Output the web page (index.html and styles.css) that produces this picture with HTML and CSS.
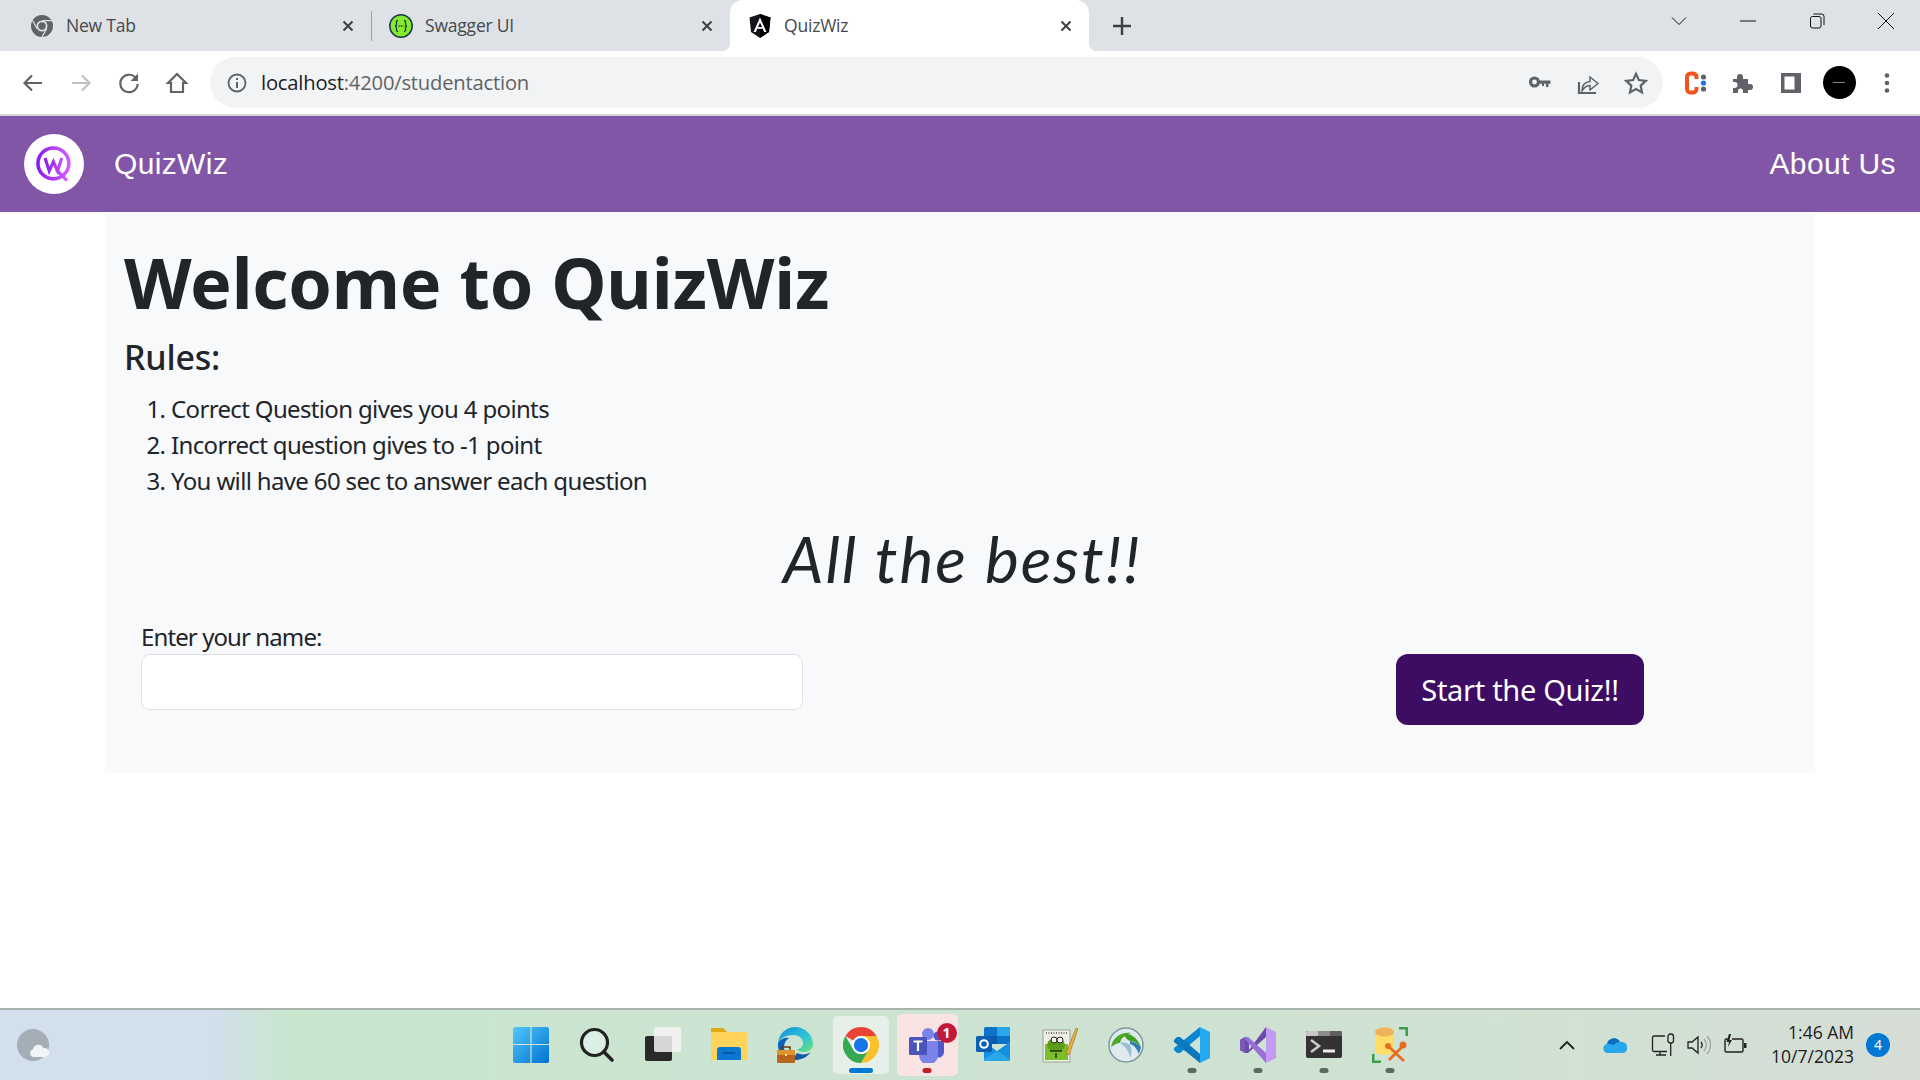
FILE: index.html
```html
<!DOCTYPE html>
<html lang="en">
<head>
    <meta charset="UTF-8">
    <title>QuizWiz</title>
    <link rel="stylesheet" href="styles.css">
</head>
<body>
    <!-- Browser tabs -->
    <div class="tabstrip">
        <div class="tab tab-first">
            <svg class="favicon" viewBox="0 0 48 48"><circle cx="24" cy="24" r="22" fill="#5f6368"/><circle cx="24" cy="24" r="11" fill="#dee1e6"/><circle cx="24" cy="24" r="7.5" fill="#5f6368"/><path d="M24 13h19M14.5 29.5L5 13M33.5 29.5L24 46" stroke="#dee1e6" stroke-width="2.5"/></svg>
            <span class="tab-title">New Tab</span>
            <svg class="tab-close" viewBox="0 0 12 12"><path d="M1.5 1.5l9 9M10.500 1.500l-9 9"/></svg>
        </div>
        <div class="tab">
            <svg class="favicon" viewBox="0 0 24 24"><circle cx="12" cy="12" r="11.200" fill="#85ea2d" stroke="#173647" stroke-width="1.500"/><path d="M9 6.500c-2 0-1.500 2-1.500 3.500S7 12 6 12c1 0 1.500.5 1.500 2s-.5 3.500 1.500 3.500M15 6.500c2 0 1.500 2 1.500 3.500s.5 2 1.500 2c-1 0-1.500.5-1.500 2s.5 3.500-1.500 3.500" fill="none" stroke="#173647" stroke-width="1.300"/><path d="M9.500 12h5" stroke="#173647" stroke-width="1.500" stroke-dasharray="1.200 .9"/></svg>
            <span class="tab-title">Swagger UI</span>
            <svg class="tab-close" viewBox="0 0 12 12"><path d="M1.5 1.5l9 9M10.500 1.500l-9 9"/></svg>
        </div>
        <div class="tab tab-active">
            <svg class="favicon" viewBox="0 0 24 24"><path d="M12 0L1.500 3.500 3 18l9 6 9-6 1.500-14.500z" fill="#12151c"/><path d="M12 0v24l9-6 1.500-14.500z" fill="#000"/><path d="M12 3.500L5.500 18h2.400l1.300-3.200h5.600l1.300 3.200h2.400zm0 5l2 4.400h-4z" fill="#fff"/></svg>
            <span class="tab-title">QuizWiz</span>
            <svg class="tab-close" viewBox="0 0 12 12"><path d="M1.5 1.5l9 9M10.500 1.500l-9 9"/></svg>
        </div>
        <svg class="new-tab" viewBox="0 0 18 18"><path d="M9 0v18M0 9h18"/></svg>
        <div class="window-controls">
            <svg viewBox="0 0 16 16"><path d="M1 4.500l7 7 7-7"/></svg>
            <svg viewBox="0 0 16 16"><path d="M0 8h16"/></svg>
            <svg viewBox="0 0 16 16"><rect x="1.500" y="3.500" width="10.500" height="11.500" rx="2"/><path d="M4.500 1h8a2.500 2.500 0 0 1 2.500 2.500V12"/></svg>
            <svg viewBox="0 0 16 16"><path d="M0 0l16 16M16 0L0 16"/></svg>
        </div>
    </div>

    <!-- Address bar -->
    <div class="toolbar">
        <div class="tool"><svg viewBox="0 0 24 24"><path d="M21 12H4M11 4.500L3.500 12l7.500 7.500" class="line"/></svg></div>
        <div class="tool tool-off"><svg viewBox="0 0 24 24"><path d="M3 12h17M13 4.500l7.500 7.500-7.500 7.500" class="line"/></svg></div>
        <div class="tool"><svg viewBox="0 0 24 24"><path d="M19.500 8A8.700 8.700 0 1 0 20.700 13" class="line"/><path d="M21 2.500V10h-7.500z" fill="#5f6368"/></svg></div>
        <div class="tool"><svg viewBox="0 0 24 24"><path d="M12 3L3 12h3v9h12v-9h3z" class="line"/></svg></div>
        <div class="omnibox">
            <svg class="info" viewBox="0 0 20 20"><circle cx="10" cy="10" r="8.500" fill="none" stroke="#5f6368" stroke-width="1.800"/><path d="M9 9h2v6H9zM9 5h2v2H9z" fill="#5f6368"/></svg>
            <span class="url">localhost<span class="url-rest">:4200/studentaction</span></span>
            <div class="omni-icons">
                <svg viewBox="0 0 24 24"><circle cx="6.500" cy="11" r="4" fill="none" stroke="#5f6368" stroke-width="3.200"/><path d="M10 9.500h12.500v3.200h-2V16h-2.500v-3.300h-2V15h-2v-2.300H10z" fill="#5f6368"/></svg>
                <svg viewBox="0 0 24 24"><path d="M3 11v11h17" class="line"/><path d="M6 20c0-6 3-9 8-9.500V6l8 6.500-8 6.500v-4.500c-3 0-6 2-8 5.500z" class="line thin"/></svg>
                <svg viewBox="0 0 24 24"><path d="M12 2.800l2.900 6.300 6.800.8-5 4.700 1.300 6.800-6-3.400-6 3.400 1.300-6.800-5-4.700 6.800-.8z" class="line"/></svg>
            </div>
        </div>
        <div class="tool"><svg viewBox="0 0 24 24"><path d="M13.500 8V6A3.500 3.500 0 0 0 10 2.500H7.500A3.500 3.500 0 0 0 4 6v12a3.500 3.500 0 0 0 3.500 3.500H10a3.500 3.500 0 0 0 3.500-3.500v-2" fill="none" stroke="#f4511e" stroke-width="4"/><circle cx="20.500" cy="6" r="2.600" fill="#5f6368"/><circle cx="20.500" cy="12" r="2.600" fill="#1a73e8"/><circle cx="20.500" cy="18" r="2.600" fill="#5f6368"/></svg></div>
        <div class="tool"><svg viewBox="0 0 24 24"><path d="M2 8h4V6a3 3 0 0 1 6 0v2h5v5h2a3 3 0 0 1 0 6h-2v3h-5v-2a2.500 2.500 0 0 0-5 0v2H2v-5h1.500a3 3 0 0 0 0-6H2z" fill="#5f6368"/></svg></div>
        <div class="tool"><svg viewBox="0 0 24 24"><path d="M2 2h20v20H2zM5.500 5.500v13h10v-13z" fill="#5f6368" fill-rule="evenodd"/></svg></div>
        <div class="tool"><div class="avatar"><span class="avatar-mark"></span></div></div>
        <div class="tool"><svg viewBox="0 0 24 24"><circle cx="12" cy="4.500" r="2.300" fill="#5f6368"/><circle cx="12" cy="12" r="2.300" fill="#5f6368"/><circle cx="12" cy="19.500" r="2.300" fill="#5f6368"/></svg></div>
    </div>

    <!-- App navbar -->
    <nav class="navbar">
        <div class="logo">
            <svg viewBox="0 0 32 32"><defs><linearGradient id="logoGrad" x1="0" x2="1"><stop offset="0" stop-color="#8a1cf0"/><stop offset="1" stop-color="#d45cff"/></linearGradient></defs><circle cx="15.500" cy="15.500" r="13" fill="none" stroke="url(#logoGrad)" stroke-width="3"/><path d="M8.500 11l3.500 11 3.500-8 3.500 8 3.500-11M18 21l9 9" fill="none" stroke="url(#logoGrad)" stroke-width="2.600"/></svg>
        </div>
        <a class="brand">QuizWiz</a>
        <a class="about">About Us</a>
    </nav>

    <!-- Page content -->
    <main class="content">
        <h1>Welcome to QuizWiz</h1>
        <h3>Rules:</h3>
        <ol class="rules">
            <li>Correct Question gives you 4 points</li>
            <li>Incorrect question gives to -1 point</li>
            <li>You will have 60 sec to answer each question</li>
        </ol>
        <h2 class="best">All the best!!</h2>
        <div class="start-row">
            <div class="name-field">
                <label for="name">Enter your name:</label>
                <input type="text" id="name">
            </div>
            <button class="start-btn">Start the Quiz!!</button>
        </div>
    </main>

    <div class="spacer"></div>

    <!-- Windows taskbar -->
    <footer class="taskbar">
        <div class="task-left">
            <svg class="weather" viewBox="0 0 34 32"><ellipse cx="16" cy="16" rx="16" ry="16" fill="#a5adb5"/><path d="M17 28a4 4 0 0 1-1-7.800 5.500 5.500 0 0 1 10.500-1A4.500 4.500 0 0 1 29 28z" fill="#f2f3f4"/></svg>
        </div>
        <div class="task-apps">
            <div class="app"><svg viewBox="0 0 36 36"><defs><linearGradient id="winGrad" x1="0" y1="0" x2="1" y2="1"><stop offset="0" stop-color="#52c6fb"/><stop offset="1" stop-color="#0073d0"/></linearGradient></defs><rect width="36" height="36" rx="2" fill="url(#winGrad)"/><path d="M18 0v36M0 17.500h36" stroke="#cfe4dc" stroke-width="1.200"/></svg></div>
            <div class="app"><svg viewBox="0 0 36 36"><circle cx="15.500" cy="15.500" r="13" fill="#dcefe4" stroke="#222" stroke-width="3.200"/><path d="M25 25l8 8" stroke="#222" stroke-width="3.600" stroke-linecap="round"/></svg></div>
            <div class="app"><svg viewBox="0 0 36 36"><rect y="9" width="27" height="25" rx="2" fill="#2a2a2a"/><rect x="9" y="0" width="27" height="25" rx="2" fill="#f4f5f4" opacity=".85"/></svg></div>
            <div class="app"><svg viewBox="0 0 36 36"><path d="M0 1h12l4 4h20v6H0z" fill="#e3a80c"/><rect y="5" width="36" height="28" fill="#fdd35c"/><path d="M6 33V23a3 3 0 0 1 3-3h18a3 3 0 0 1 3 3v10z" fill="#0a78d0"/><path d="M12 26h12" stroke="#004f94" stroke-width="1.500"/></svg></div>
            <div class="app"><svg viewBox="0 0 36 36"><defs><linearGradient id="edgeGrad" x1="0" y1="0" x2="1" y2="1"><stop offset="0" stop-color="#0c8fd8"/><stop offset=".6" stop-color="#34c6d8"/><stop offset="1" stop-color="#6ee26a"/></linearGradient></defs><path d="M1 16C2 6 10 0 18 0c10 0 18 8 18 17 0 5-4 8-9 8-3 0-6-1-7-3 3 0 6-2 6-6 0-4-4-8-9-8C9 8 3 11 1 16z" fill="url(#edgeGrad)"/><path d="M1 16c2-4 7-6 11-5-3 2-5 5-5 9 0 5 4 11 11 13C8 34 0 26 1 16z" fill="#0b62b8"/><path d="M18 33c6 0 11-2 16-8-4 3-10 3-14 1-2 2-3 5-2 7z" fill="#1158a8"/><rect y="23" width="18" height="13" rx="1" fill="#b5651d"/><rect x="5" y="20" width="8" height="4" fill="none" stroke="#6b3d10" stroke-width="1.500"/><rect y="23" width="18" height="5" fill="#e0922c"/><rect x="8" y="27" width="2" height="2" fill="#ffe27a"/></svg></div>
            <div class="app app-chrome"><svg viewBox="0 0 48 48"><path d="M24 0A24 24 0 0 1 44.800 12H24a12 12 0 0 0-10.400 6L3.200 12A24 24 0 0 1 24 0z" fill="#ea4335"/><path d="M44.800 12A24 24 0 0 1 24 48l10.400-18A12 12 0 0 0 24 12z" fill="#fbc02d"/><path d="M3.200 12l10.400 18a12 12 0 0 0 20.800 0L24 48A24 24 0 0 1 3.200 12z" fill="#34a853"/><circle cx="24" cy="24" r="12" fill="#fff"/><circle cx="24" cy="24" r="9.500" fill="#1a73e8"/></svg><span class="run-mark run-blue"></span></div>
            <div class="app app-teams"><svg viewBox="0 0 36 36"><circle cx="19" cy="7" r="6" fill="#7b83eb"/><circle cx="29" cy="9" r="4.500" fill="#5059c9"/><path d="M24 14h11v11a5 5 0 0 1-11 0z" fill="#5059c9"/><path d="M10 14h19v14a9 9 0 0 1-19 0z" fill="#7b83eb"/><rect y="10" width="18" height="18" rx="1.500" fill="#4b53bc"/><path d="M4.500 14.500h9M9 14.500V24" stroke="#fff" stroke-width="2.200"/></svg><span class="badge">1</span><span class="run-mark run-red"></span></div>
            <div class="app"><svg viewBox="0 0 36 36"><rect x="8" y="0" width="26" height="17" rx="1.500" fill="#0e72c9"/><path d="M21 0h13v9H21z" fill="#28a8ea"/><path d="M8 9h13v8H8z" fill="#0a5aa8"/><path d="M8 15l13 9 13-9v17a2 2 0 0 1-2 2H10a2 2 0 0 1-2-2z" fill="#1490df"/><path d="M8 32l13-8 13 8v2H8z" fill="#28a8ea"/><rect y="9" width="16" height="16" rx="1.500" fill="#0a5fb4"/><circle cx="8" cy="17" r="3.800" fill="none" stroke="#fff" stroke-width="2"/></svg></div>
            <div class="app"><svg viewBox="0 0 36 36"><rect x="1" y="3" width="27" height="32" fill="#eef0e8" stroke="#9aa49a"/><path d="M4 6h21" stroke="#777" stroke-dasharray="1 1.500" stroke-width="2"/><path d="M3 17h23v16H3z" fill="#7cbd2a"/><ellipse cx="14" cy="18" rx="9" ry="7" fill="#5d9c1b"/><circle cx="12" cy="13" r="3" fill="#f4f4e8" stroke="#222"/><circle cx="18" cy="13" r="3" fill="#f4f4e8" stroke="#222"/><path d="M8 24h12M14 26v5" stroke="#1b3a0a" stroke-width="1.500"/><path d="M24 26L34 1l2 1-9 26z" fill="#e8b23c" stroke="#8a5a15" stroke-width=".5"/></svg></div>
            <div class="app"><svg viewBox="0 0 36 36"><circle cx="18" cy="18" r="17" fill="#dfeaee" stroke="#7e98a0" stroke-width="1.500"/><path d="M3 20C5 10 13 5 23 6c-6 2-10 5-11 10-3 0-6 2-9 4z" fill="#4da823"/><path d="M15 7c7-1 14 3 18 13-4-4-7-6-11-6-3-1-5-4-7-7z" fill="#3fa023"/><path d="M22 14c5 1 8 3 11 6l-2 7c-2-5-5-9-9-10z" fill="#2f7fb0"/><path d="M12 16c4-1 8 0 10 2 2 3 2 8 0 13-1-6-3-10-10-15z" fill="#2f7fb0" opacity=".4"/></svg></div>
            <div class="app"><svg viewBox="0 0 36 36"><path d="M26 0l10 5v26l-10 5z" fill="#24a8ef"/><path d="M26 0v9L6 26H3l-3-3v-2z" fill="#0a87d2"/><path d="M26 36v-9L6 10H3l-3 3v2z" fill="#0b77bd"/></svg><span class="run-mark run-gray"></span></div>
            <div class="app"><svg viewBox="0 0 36 36"><path d="M26 0l10 5v26l-10 5z" fill="#c49bf4"/><path d="M26 0v10L8 26H5L0 23V13l5-3 4 3v10l17-23" fill="#6c4ca8"/><path d="M26 36V26L8 10H5l-1 1 22 25z" fill="#9a6ed8"/><path d="M0 13l5-3v16l-5-3z" fill="#7d58b8"/></svg><span class="run-mark run-gray"></span></div>
            <div class="app"><svg viewBox="0 0 36 28"><rect width="36" height="27" rx="2" fill="#333"/><path d="M0 2a2 2 0 0 1 2-2h10v5H0z" fill="#c8c8c8"/><path d="M12 0h12v5H12z" fill="#8c8c8c"/><path d="M24 0h10a2 2 0 0 1 2 2v3H24z" fill="#606060"/><path d="M5 9l8 6-8 6" fill="none" stroke="#ccc" stroke-width="2.600"/><path d="M17 20h12" stroke="#ececec" stroke-width="3"/></svg><span class="run-mark run-gray"></span></div>
            <div class="app"><svg viewBox="0 0 36 36"><path d="M27 1h8v8M9 35H1v-8" fill="none" stroke="#3b9c4c" stroke-width="3"/><path d="M3 5c0-6 19-6 19 0v19c0 5-19 5-19 0z" fill="#fedd66"/><ellipse cx="12.500" cy="5" rx="9.500" ry="4.500" fill="#efb25f"/><path d="M15 18l17 16M33 17L17 33" stroke="#ea6a1f" stroke-width="2.800"/><circle cx="31" cy="18" r="3.500" fill="#ea6a1f"/><circle cx="16" cy="19" r="3" fill="#ea6a1f"/></svg><span class="run-mark run-gray"></span></div>
        </div>
        <div class="task-tray">
            <svg class="tray-chevron" viewBox="0 0 16 10"><path d="M1 9l7-7 7 7"/></svg>
            <svg class="tray-cloud" viewBox="0 0 24 16"><path d="M5 16a4.500 4.500 0 0 1-1-8.900A7 7 0 0 1 17 5a5.500 5.500 0 0 1 7 6 4.500 4.500 0 0 1-4 5z" fill="#28a8ea"/><path d="M4 7.100A7 7 0 0 1 17 5c-3 0-5 1-6 3-2-1-5-1-7-.9z" fill="#0f6cbd"/></svg>
            <svg class="tray-icon" viewBox="0 0 24 24"><path d="M14 3H3a1.500 1.500 0 0 0-1.500 1.500V17A1.500 1.500 0 0 0 3 18.500h13M9 18.500V22M5 22h10" fill="none" stroke="#222" stroke-width="1.300"/><rect x="17" y="1" width="5.500" height="9" rx="2.500" fill="none" stroke="#222" stroke-width="1.300"/><path d="M19.700 10v13" stroke="#222" stroke-width="1.300"/></svg>
            <svg class="tray-icon" viewBox="0 0 24 24"><path d="M1 9h4l6-5v16l-6-5H1z" fill="none" stroke="#222" stroke-width="1.300"/><path d="M14 9a5 5 0 0 1 0 6" fill="none" stroke="#222" stroke-width="1.300"/><path d="M17 6a9 9 0 0 1 0 12M20 3a13 13 0 0 1 0 18" fill="none" stroke="#9aa59c" stroke-width="1.300"/></svg>
            <svg class="tray-icon" viewBox="0 0 24 24"><path d="M5 6H3.500A1.500 1.500 0 0 0 2 7.500v10A1.500 1.500 0 0 0 3.500 19h15a1.500 1.500 0 0 0 1.500-1.500v-10A1.500 1.500 0 0 0 18.500 6H9" fill="none" stroke="#222" stroke-width="1.400"/><path d="M21 10h2.500v5H21zM6 1L3.500 9h2.500l-1 5 4-7H6.500L8 1z" fill="#222"/></svg>
            <div class="clock"><div>1:46 AM</div><div>10/7/2023</div></div>
            <div class="notify">4</div>
        </div>
    </footer>
</body>
</html>
```

FILE: styles.css
```css
/* General Reset */
* {
    box-sizing: border-box;
    margin: 0;
    padding: 0;
}
body {
    display: flex;
    flex-direction: column;
    width: 1920px;
    height: 1080px;
    overflow: hidden;
    background: #fff;
    font-family: "Noto Sans", Arial, sans-serif;
    color: #212529;
}

/* Browser Tabs */
.tabstrip {
    position: relative;
    display: flex;
    align-items: center;
    height: 51px;
    padding-left: 12px;
    background: #dee1e6;
}
.tab {
    position: relative;
    display: flex;
    align-items: center;
    gap: 12px;
    width: 359px;
    height: 51px;
    padding: 0 17px 0 18px;
    font-family: "Open Sans", Arial, sans-serif;
    font-size: 17.500px;
    color: #45494d;
}
.tab-first::after {
    content: "";
    position: absolute;
    right: -1px;
    top: 11px;
    height: 30px;
    border-right: 1px solid #9da1a6;
}
.tab-active {
    background: #fff;
    border-radius: 13px 13px 0 0;
}
.tab-active::before,
.tab-active::after {
    content: "";
    position: absolute;
    bottom: 0;
    width: 8px;
    height: 8px;
}
.tab-active::before {
    left: -8px;
    background: radial-gradient(circle at 0 0, #dee1e6 8px, #fff 8.5px);
}
.tab-active::after {
    right: -8px;
    background: radial-gradient(circle at 100% 0, #dee1e6 8px, #fff 8.5px);
}
.favicon {
    width: 24px;
    height: 24px;
    flex: none;
}
.tab-title {
    flex: 1;
    margin-top: -2px;
    letter-spacing: -0.2px;
}
.tab-close {
    width: 12px;
    height: 12px;
    fill: none;
    stroke: #3c4043;
    stroke-width: 2;
}
.new-tab {
    width: 18px;
    height: 18px;
    margin-left: 24px;
    fill: none;
    stroke: #3c4043;
    stroke-width: 2.400;
}
.window-controls {
    display: flex;
    gap: 53px;
    margin-left: auto;
    margin-right: 26px;
    margin-bottom: 9px;
}
.window-controls svg {
    width: 16px;
    height: 16px;
    fill: none;
    stroke: #111;
    stroke-width: 1;
}

/* Address Bar */
.toolbar {
    display: flex;
    align-items: center;
    height: 63px;
    padding: 0 9px;
    background: #fff;
}
.tool {
    display: flex;
    align-items: center;
    justify-content: center;
    flex: none;
    width: 48px;
    height: 48px;
}
.tool svg {
    width: 24px;
    height: 24px;
}
.line {
    fill: none;
    stroke: #5f6368;
    stroke-width: 2.200;
}
.thin {
    stroke-width: 1.500;
}
.tool-off .line {
    stroke: #bdc1c6;
}
.omnibox {
    display: flex;
    align-items: center;
    flex: 1;
    height: 51px;
    margin: 0 8px 0 9px;
    padding-left: 17px;
    border-radius: 26px;
    background: #f1f3f4;
}
.info {
    width: 20px;
    height: 20px;
    margin-right: 14px;
}
.url {
    margin-bottom: 2px;
    font-family: "Open Sans", Arial, sans-serif;
    font-size: 20.200px;
    letter-spacing: -0.2px;
    color: #202124;
}
.url-rest {
    color: #5f6368;
}
.omni-icons {
    display: flex;
    gap: 24px;
    margin-left: auto;
    margin-right: 15px;
}
.omni-icons svg {
    width: 24px;
    height: 24px;
}
.avatar {
    display: flex;
    align-items: center;
    justify-content: center;
    width: 33px;
    height: 33px;
    border-radius: 50%;
    background: #000;
}
.avatar-mark {
    width: 12px;
    height: 1px;
    background: #888;
}

/* Navbar */
.navbar {
    display: flex;
    align-items: center;
    height: 98px;
    padding: 0 24px;
    border-top: 2px solid #d3d5d8;
    background: #8256a7;
    font-family: "Liberation Sans", Arial, sans-serif;
    color: #fff;
}
.logo {
    display: flex;
    align-items: center;
    justify-content: center;
    width: 60px;
    height: 60px;
    border-radius: 50%;
    background: #fff;
}
.logo svg {
    width: 38px;
    height: 38px;
}
.brand {
    margin-left: 30px;
    font-size: 30px;
    letter-spacing: 0.350px;
}
.about {
    margin-left: auto;
    font-size: 30px;
    letter-spacing: 0.400px;
}

/* Page Content */
.content {
    width: 1710px;
    margin-left: 105px;
    padding: 0 19px 48px;
    background: #f8f9fa;
}
h1 {
    margin-top: 28px;
    font-size: 70px;
    line-height: 84px;
    font-weight: 700;
    letter-spacing: -0.200px;
}
h3 {
    margin-top: 13px;
    font-size: 34px;
    line-height: 40px;
    font-weight: 500;
    letter-spacing: -0.200px;
}
.rules {
    margin-top: 14px;
    padding-left: 47px;
    font-size: 24px;
    line-height: 36px;
    letter-spacing: -0.650px;
}
.best {
    margin-top: 18px;
    padding-left: 5px;
    text-align: center;
    font-family: "Lato", sans-serif;
    font-style: italic;
    font-size: 64px;
    line-height: 84px;
    font-weight: 400;
    letter-spacing: 2px;
}
.start-row {
    display: flex;
    justify-content: space-between;
    align-items: flex-start;
    margin: 17px 152px 0 17px;
}
.name-field {
    width: 662px;
}
.name-field label {
    display: block;
    padding-top: 3px;
    padding-bottom: 1px;
    font-size: 24px;
    line-height: 32px;
    letter-spacing: -0.900px;
}
.name-field input {
    display: block;
    width: 100%;
    height: 56px;
    border: 1px solid #dee2e6;
    border-radius: 9px;
    background: #fff;
}
.start-btn {
    width: 248px;
    height: 71px;
    margin-top: 36px;
    border: none;
    border-radius: 12px;
    background: #3c0d63;
    color: #fff;
    font-family: "Noto Sans", Arial, sans-serif;
    font-size: 29px;
    letter-spacing: -0.300px;
}

.spacer {
    flex: 1;
}

/* Taskbar */
.taskbar {
    display: grid;
    grid-template-columns: 1fr auto 1fr;
    align-items: center;
    height: 72px;
    border-top: 2px solid #a9b3ad;
    background: linear-gradient(90deg, #d2dfec 0, #d2dfec 210px, #c9e6cf 290px, #cde3d2 900px, #d0e2d3 1500px, #d6ddd6 1920px);
}
.task-left {
    padding-left: 17px;
}
.weather {
    display: block;
    width: 34px;
    height: 32px;
}
.task-apps {
    display: flex;
    margin-left: 1px;
}
.app {
    position: relative;
    display: flex;
    align-items: center;
    justify-content: center;
    width: 66.100px;
    height: 70px;
}
.app svg {
    position: relative;
    width: 36px;
    height: 36px;
}
.app-chrome::before,
.app-teams::before {
    content: "";
    position: absolute;
    top: 6px;
    bottom: 6px;
    left: 5px;
    right: 5px;
    border-radius: 5px;
    background: #e6f0e9;
}
.app-teams::before {
    top: 4px;
    bottom: 4px;
    left: 3px;
    right: 3px;
    background: #f9e3e3;
}
.badge {
    position: absolute;
    top: 13px;
    right: 4px;
    width: 20px;
    height: 20px;
    border-radius: 50%;
    background: #c4183b;
    color: #fff;
    font-size: 14px;
    line-height: 20px;
    font-weight: 700;
    text-align: center;
}
.run-mark {
    position: absolute;
    left: 50%;
    bottom: 7px;
    height: 5px;
    border-radius: 3px;
    transform: translateX(-50%);
}
.run-blue {
    width: 24px;
    background: #0078d4;
}
.run-red {
    width: 9px;
    background: #c4201f;
}
.run-gray {
    width: 9px;
    background: #5d6a63;
}
.task-tray {
    display: flex;
    align-items: center;
    justify-content: flex-end;
    padding-right: 30px;
}
.tray-chevron {
    width: 16px;
    height: 10px;
    fill: none;
    stroke: #222;
    stroke-width: 1.800;
    margin-right: 28px;
}
.tray-cloud {
    width: 24px;
    height: 16px;
    margin-right: 24px;
}
.tray-icon {
    width: 24px;
    height: 24px;
    margin-right: 12px;
}
.clock {
    width: 95px;
    margin-bottom: 2px;
    font-family: "Open Sans", Arial, sans-serif;
    font-size: 17.500px;
    line-height: 24px;
    white-space: nowrap;
    text-align: right;
    color: #1c1c1c;
}
.notify {
    width: 24px;
    height: 24px;
    margin-left: 12px;
    border-radius: 50%;
    background: #0078d4;
    color: #fff;
    font-size: 14px;
    line-height: 24px;
    text-align: center;
}
```
